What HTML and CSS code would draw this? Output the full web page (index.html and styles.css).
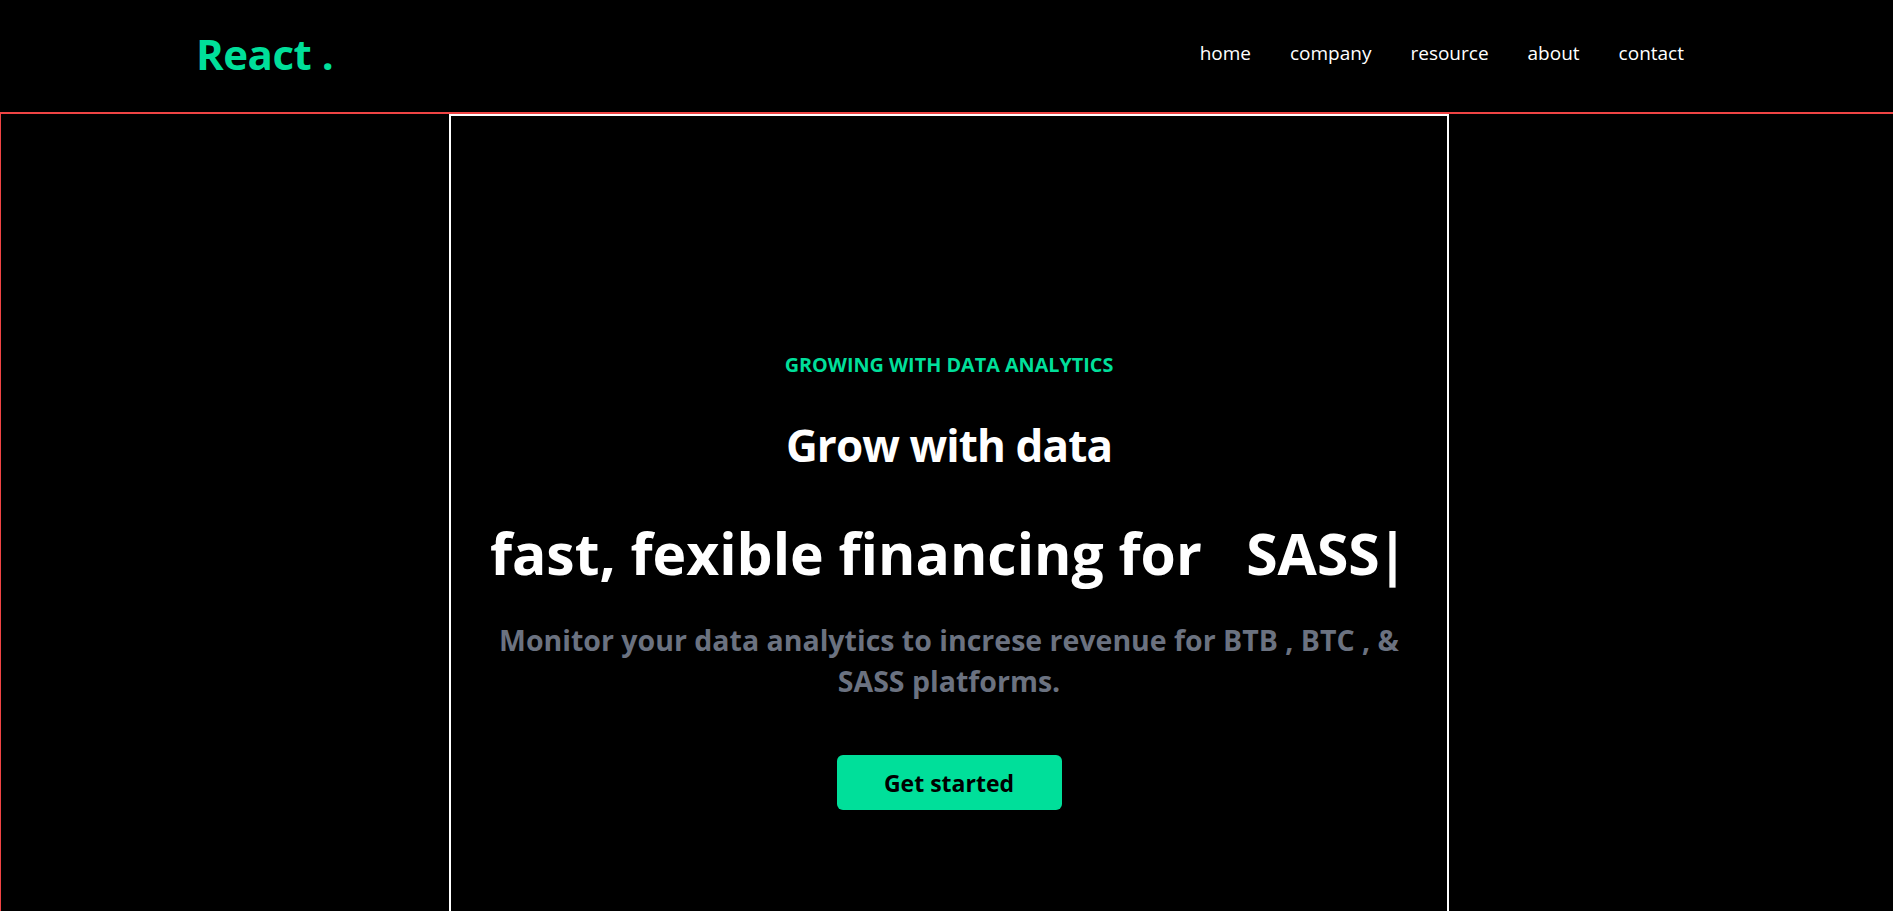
FILE: index.html
```html
<!DOCTYPE html>
<html lang="en">
<head>
<meta charset="utf-8">
<title>React .</title>
<link rel="stylesheet" href="styles.css">
</head>
<body>
  <header class="navbar">
    <h1 class="logo">React .</h1>
    <ul class="nav-links">
      <li>home</li>
      <li>company</li>
      <li>resource</li>
      <li>about</li>
      <li>contact</li>
    </ul>
  </header>
  <main class="hero-wrap">
    <section class="hero">
      <p class="tagline">GROWING WITH DATA ANALYTICS</p>
      <h2 class="title">Grow with data</h2>
      <h3 class="headline">fast, fexible financing for&nbsp;&nbsp; SASS<span class="cursor">|</span></h3>
      <p class="lead">Monitor your data analytics to increse revenue for BTB , BTC , &amp; SASS platforms.</p>
      <button class="cta">Get started</button>
    </section>
  </main>
</body>
</html>
```
FILE: styles.css
```css
* { box-sizing: border-box; }
html, body { margin: 0; padding: 0; background: #000; overflow: hidden; }
body {
  font-family: "Open Sans", "Noto Sans", sans-serif;
  color: #fff;
  height: 911px;
}
.navbar {
  height: 112px;
  display: flex;
  align-items: center;
  justify-content: space-between;
  padding: 0 209px 0 196px;
}
.logo {
  margin: 0;
  font-size: 42px;
  font-weight: 700;
  color: #00df9a;
  letter-spacing: -0.5px;
  line-height: 1;
  padding-bottom: 4px;
}
.nav-links {
  list-style: none;
  display: flex;
  margin: 0;
  padding: 0 0 6px 0;
  gap: 39px;
  font-size: 19px;
}
.hero-wrap {
  border-top: 2px solid #ef4444;
  border-left: 1px solid #ef4444;
  height: 900px;
}
.hero {
  width: 1000px;
  margin-left: 448px;
  height: 900px;
  border: 2px solid #fff;
  border-bottom: none;
  text-align: center;
  padding-top: 235px;
}
.tagline {
  margin: 0;
  font-size: 19.8px;
  line-height: 28px;
  font-weight: 700;
  color: #00df9a;
}
.title {
  margin: 38px 0 0;
  font-size: 44px;
  line-height: 56px;
  font-weight: 700;
  letter-spacing: -0.9px;
}
.headline {
  margin: 44px 0 0;
  font-size: 57px;
  line-height: 72px;
  font-weight: 700;
}
.cursor { margin-left: -3px; }
.lead {
  margin: 31px auto 0;
  width: 920px;
  font-size: 28.5px;
  line-height: 41px;
  font-weight: 700;
  color: #6b7280;
}
.cta {
  display: block;
  margin: 53px auto 0;
  width: 225px;
  height: 55px;
  border: none;
  border-radius: 6px;
  background: #00df9a;
  color: #000;
  font-family: inherit;
  font-size: 23px;
  font-weight: 700;
}
```
